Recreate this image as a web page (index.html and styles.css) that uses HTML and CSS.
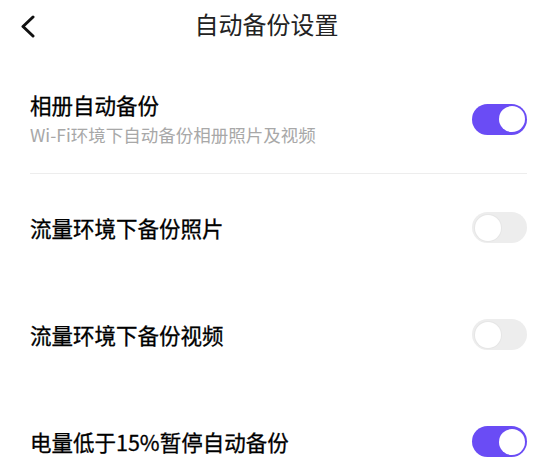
FILE: index.html
```html
<!DOCTYPE html>
<html lang="zh-CN">
<head>
<meta charset="utf-8">
<title>自动备份设置</title>
<link rel="stylesheet" href="styles.css">
</head>
<body>
<div class="page">
  <header class="header">
    <svg class="back" width="20" height="24" viewBox="0 0 20 24">
      <polyline points="13,3 3,12.5 13,22" fill="none" stroke="#111" stroke-width="3" stroke-linecap="round" stroke-linejoin="round"/>
    </svg>
    <h1 class="title">自动备份设置</h1>
  </header>
  <section class="list">
    <div class="row row-first">
      <div class="text">
        <div class="label">相册自动备份</div>
        <div class="desc">Wi-Fi环境下自动备份相册照片及视频</div>
      </div>
      <span class="toggle on"><span class="knob"></span></span>
    </div>
    <div class="divider"></div>
    <div class="row">
      <div class="label">流量环境下备份照片</div>
      <span class="toggle"><span class="knob"></span></span>
    </div>
    <div class="row">
      <div class="label">流量环境下备份视频</div>
      <span class="toggle"><span class="knob"></span></span>
    </div>
    <div class="row">
      <div class="label">电量低于15%暂停自动备份</div>
      <span class="toggle on"><span class="knob"></span></span>
    </div>
  </section>
</div>
</body>
</html>
```
FILE: styles.css
```css
html, body {
  margin: 0;
  padding: 0;
  background: #ffffff;
}
body {
  font-family: "Noto Sans CJK SC", "Noto Sans", sans-serif;
  color: #111;
  overflow: hidden;
}
.page {
  width: 547px;
  height: 473px;
  overflow: hidden;
}
.header {
  height: 48px;
  display: flex;
  align-items: center;
  justify-content: center;
  position: relative;
}
.back {
  position: absolute;
  left: 20px;
  top: 14px;
}
.title {
  margin: 0 14px 0 0;
  font-size: 24px;
  font-weight: 400;
  line-height: 30px;
  color: #222;
}
.list {
  padding: 0 20px 0 30px;
}
.row {
  height: 107px;
  display: flex;
  align-items: center;
  justify-content: space-between;
}
.row-first {
  height: auto;
  padding: 42px 0 25px;
}
.label {
  font-size: 21.5px;
  line-height: 30px;
  font-weight: 400;
  color: #000;
  -webkit-text-stroke: 0.3px #000;
}
.desc {
  margin-top: 2px;
  font-size: 17.5px;
  line-height: 26px;
  color: #a8a8a8;
}
.divider {
  height: 1px;
  background: #ededed;
}
.toggle {
  width: 55px;
  height: 31px;
  border-radius: 16px;
  background: #ededed;
  position: relative;
  flex: none;
}
.toggle .knob {
  position: absolute;
  top: 2.5px;
  left: 2.5px;
  width: 26px;
  height: 26px;
  border-radius: 50%;
  background: #fff;
  box-shadow: 0 0 0 1px #e6e6e6;
}
.toggle.on {
  background: #6a4cf5;
}
.toggle.on .knob {
  left: auto;
  right: 2.5px;
  box-shadow: none;
}
```
